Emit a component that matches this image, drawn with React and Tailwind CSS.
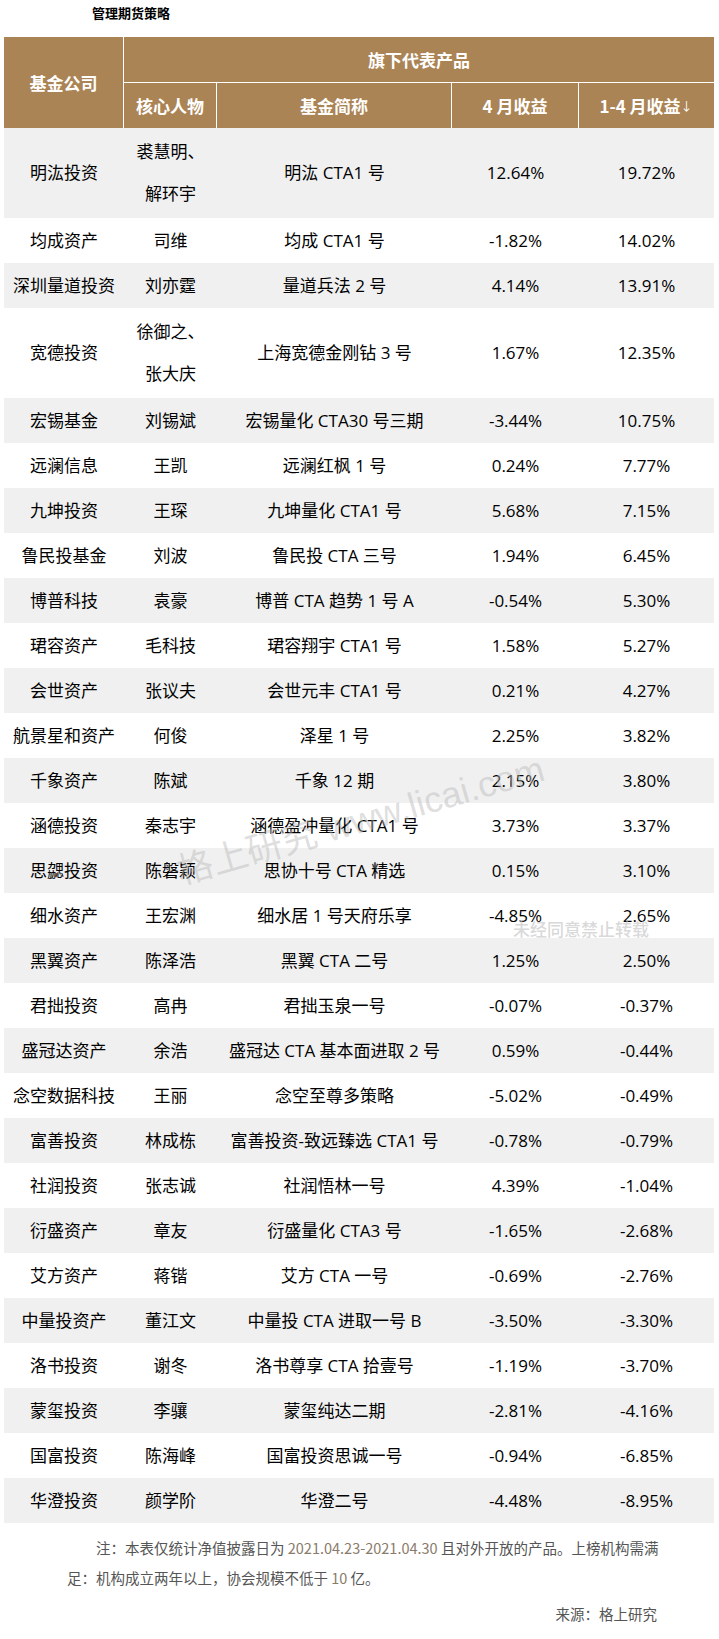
import React from 'react';

const rows = [
  ['明汯投资', ['裘慧明、', '解环宇'], '明汯 CTA1 号', '12.64%', '19.72%'],
  ['均成资产', ['司维'], '均成 CTA1 号', '-1.82%', '14.02%'],
  ['深圳量道投资', ['刘亦霆'], '量道兵法 2 号', '4.14%', '13.91%'],
  ['宽德投资', ['徐御之、', '张大庆'], '上海宽德金刚钻 3 号', '1.67%', '12.35%'],
  ['宏锡基金', ['刘锡斌'], '宏锡量化 CTA30 号三期', '-3.44%', '10.75%'],
  ['远澜信息', ['王凯'], '远澜红枫 1 号', '0.24%', '7.77%'],
  ['九坤投资', ['王琛'], '九坤量化 CTA1 号', '5.68%', '7.15%'],
  ['鲁民投基金', ['刘波'], '鲁民投 CTA 三号', '1.94%', '6.45%'],
  ['博普科技', ['袁豪'], '博普 CTA 趋势 1 号 A', '-0.54%', '5.30%'],
  ['珺容资产', ['毛科技'], '珺容翔宇 CTA1 号', '1.58%', '5.27%'],
  ['会世资产', ['张议夫'], '会世元丰 CTA1 号', '0.21%', '4.27%'],
  ['航景星和资产', ['何俊'], '泽星 1 号', '2.25%', '3.82%'],
  ['千象资产', ['陈斌'], '千象 12 期', '2.15%', '3.80%'],
  ['涵德投资', ['秦志宇'], '涵德盈冲量化 CTA1 号', '3.73%', '3.37%'],
  ['思勰投资', ['陈磐颖'], '思协十号 CTA 精选', '0.15%', '3.10%'],
  ['细水资产', ['王宏渊'], '细水居 1 号天府乐享', '-4.85%', '2.65%'],
  ['黑翼资产', ['陈泽浩'], '黑翼 CTA 二号', '1.25%', '2.50%'],
  ['君拙投资', ['高冉'], '君拙玉泉一号', '-0.07%', '-0.37%'],
  ['盛冠达资产', ['余浩'], '盛冠达 CTA 基本面进取 2 号', '0.59%', '-0.44%'],
  ['念空数据科技', ['王丽'], '念空至尊多策略', '-5.02%', '-0.49%'],
  ['富善投资', ['林成栋'], '富善投资-致远臻选 CTA1 号', '-0.78%', '-0.79%'],
  ['社润投资', ['张志诚'], '社润悟林一号', '4.39%', '-1.04%'],
  ['衍盛资产', ['章友'], '衍盛量化 CTA3 号', '-1.65%', '-2.68%'],
  ['艾方资产', ['蒋锴'], '艾方 CTA 一号', '-0.69%', '-2.76%'],
  ['中量投资产', ['董江文'], '中量投 CTA 进取一号 B', '-3.50%', '-3.30%'],
  ['洛书投资', ['谢冬'], '洛书尊享 CTA 拾壹号', '-1.19%', '-3.70%'],
  ['蒙玺投资', ['李骧'], '蒙玺纯达二期', '-2.81%', '-4.16%'],
  ['国富投资', ['陈海峰'], '国富投资思诚一号', '-0.94%', '-6.85%'],
  ['华澄投资', ['颜学阶'], '华澄二号', '-4.48%', '-8.95%'],
];

const cols = 'grid grid-cols-[120px_93px_235px_127px_135px]';

const App = () => {
  return (
    <div
      className="relative w-[719px] min-h-[1639px] bg-white text-black"
      style={{ fontFamily: '"Open Sans", "Noto Sans CJK SC", sans-serif' }}
    >
      <div className="h-[37px] pl-[92px] pt-[3px] text-[13px] leading-[20px] font-bold font-['Noto_Sans_CJK_SC',sans-serif]">
        管理期货策略
      </div>

      <div className="ml-[4px] w-[710px]">
        {/* header */}
        <div className="flex h-[91px] bg-[#ab8455] text-white text-[17px] font-bold font-['Noto_Sans_CJK_SC',sans-serif]">
          <div className="w-[120px] flex items-center justify-center border-r border-white">
            基金公司
          </div>
          <div className="flex-1 flex flex-col">
            <div className="h-[46px] flex items-center justify-center border-b border-white">
              旗下代表产品
            </div>
            <div className="flex-1 grid grid-cols-[92px_235px_127px_135px]">
              <div className="flex items-center justify-center">核心人物</div>
              <div className="flex items-center justify-center border-l border-white">基金简称</div>
              <div className="flex items-center justify-center border-l border-white">4 月收益</div>
              <div className="flex items-center justify-center border-l border-white">
                1-4 月收益<span className="text-[12px] font-normal">↓</span>
              </div>
            </div>
          </div>
        </div>

        {/* body */}
        {rows.map((r, i) => {
          const tall = r[1].length > 1;
          return (
            <div
              key={r[0]}
              className={`${cols} text-[17px] ${tall ? 'h-[90px]' : 'h-[45px]'} ${i % 2 === 0 ? 'bg-[#f0f0f0]' : 'bg-white'}`}
            >
              <div className="flex items-center justify-center whitespace-nowrap">{r[0]}</div>
              <div className="flex flex-col items-center justify-center leading-[42px] whitespace-nowrap">
                {r[1].map((n) => (
                  <span key={n}>{n}</span>
                ))}
              </div>
              <div className="flex items-center justify-center whitespace-nowrap">{r[2]}</div>
              <div className="flex items-center justify-center">{r[3]}</div>
              <div className="flex items-center justify-center">{r[4]}</div>
            </div>
          );
        })}
      </div>

      {/* note */}
      <div className="ml-[67px] w-[592px] mt-[10px] text-[14.5px] leading-[30px] text-[#555] font-['Noto_Sans_CJK_SC',sans-serif]">
        <p className="indent-[29px] whitespace-nowrap">
          注：本表仅统计净值披露日为 <span className="text-[#8a7b6b]">2021.04.23-2021.04.30</span> 且对外开放的产品。上榜机构需满
        </p>
        <p className="whitespace-nowrap">
          足：机构成立两年以上，协会规模不低于 <span className="text-[#8a7b6b]">10</span> 亿。
        </p>
        <p className="mt-[6px] text-right pr-[2px]">来源：格上研究</p>
      </div>

      {/* watermarks */}
      <div className="absolute left-[178px] top-[853px] origin-left -rotate-[16deg] text-[36px] leading-[40px] whitespace-nowrap text-[#b8b8b8]/45 font-['Liberation_Sans','Noto_Sans_CJK_SC',sans-serif] pointer-events-none">
        格上研究 www.licai.com
      </div>
      <div className="absolute left-[513px] top-[917px] text-[17px] leading-[24px] font-medium text-[#cfcfcf]/80 whitespace-nowrap font-['Noto_Sans_CJK_SC',sans-serif] pointer-events-none">
        未经同意禁止转载
      </div>
    </div>
  );
};

export default App;
